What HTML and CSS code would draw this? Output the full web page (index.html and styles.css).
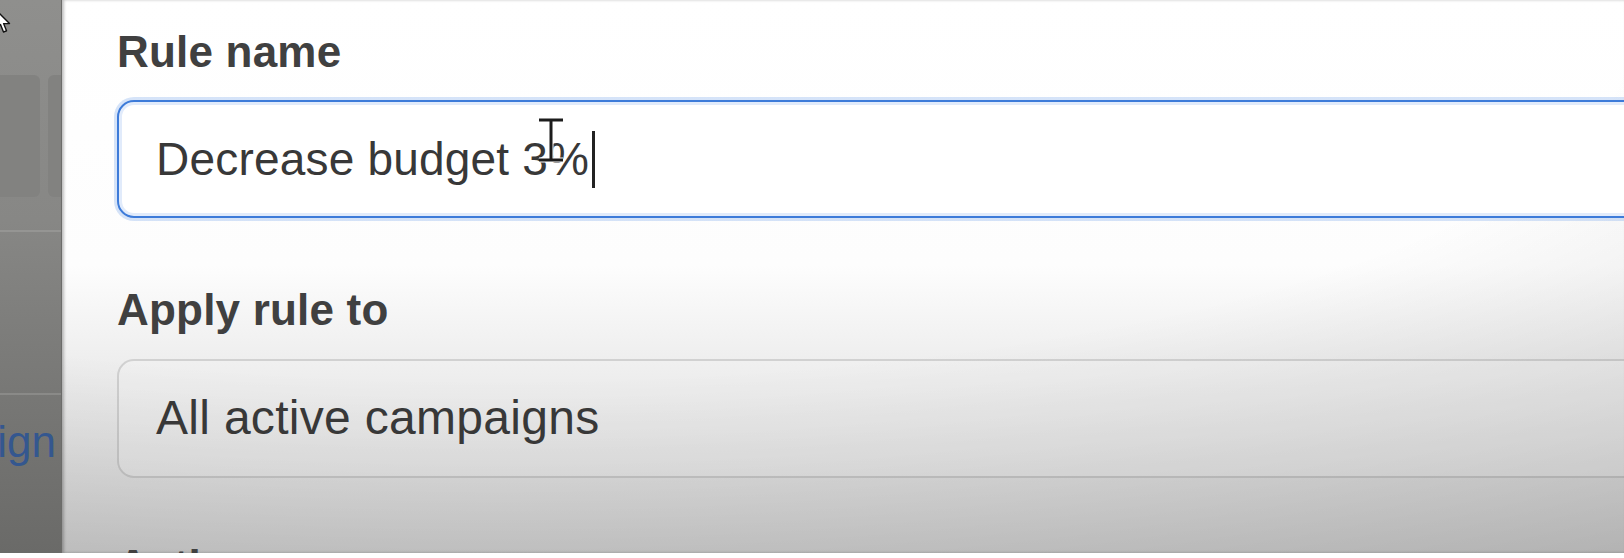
FILE: index.html
```html
<!DOCTYPE html>
<html lang="en">
<head>
    <meta charset="UTF-8">
    <meta name="viewport" content="width=device-width, initial-scale=1.0">
    <title>Create rule</title>
    <link rel="stylesheet" href="styles.css">
</head>
<body>
    <div class="frame">
        <!-- Dimmed page behind the dialog -->
        <aside class="backdrop">
            <div class="backdrop-cards">
                <div class="bcard wide"></div>
                <div class="bcard narrow"></div>
            </div>
            <div class="backdrop-row"></div>
            <div class="backdrop-link"><span>Campaign</span></div>
        </aside>

        <!-- Rule dialog -->
        <section class="dialog">
            <label class="field-label" for="ruleName">Rule name</label>
            <div class="text-input focused" id="ruleName">
                <span class="value">Decrease budget 3%</span>
                <span class="caret"></span>
                <svg class="ibeam" width="26" height="46" viewBox="0 0 26 46">
                    <path d="M1 3 H25 M13 3 V43 M1 43 H25" fill="none" stroke="#fff" stroke-width="5"/>
                    <path d="M1 3 H25 M13 3 V43 M1 43 H25" fill="none" stroke="#1c1c1c" stroke-width="3"/>
                </svg>
            </div>

            <label class="field-label second">Apply rule to</label>
            <div class="text-input select">
                <span class="value">All active campaigns</span>
            </div>

            <label class="field-label third">Action</label>
        </section>

        <svg class="pointer" width="16" height="26" viewBox="0 0 16 26">
            <path d="M1 1 L1 20 L5.5 15.5 L8.5 23 L11.5 21.8 L8.6 14.6 L14.5 14.6 Z" fill="#fff" stroke="#111" stroke-width="1.4" stroke-linejoin="round"/>
        </svg>
    </div>
</body>
</html>
```

FILE: styles.css
```css
* {
    box-sizing: border-box;
}

html, body {
    margin: 0;
    padding: 0;
}

body {
    width: 1624px;
    height: 558px;
    overflow: hidden;
    background-color: #fff;
    font-family: "Liberation Sans", Arial, sans-serif;
}

.frame {
    position: relative;
    display: flex;
    height: 553px;
    overflow: hidden;
}

/* Dimmed page on the left */
.backdrop {
    flex: none;
    width: 62px;
    background: linear-gradient(to bottom, #8f8f8d 0%, #878785 40%, #787876 70%, #6a6a68 100%);
    border-right: 1px solid #6c6c6a;
}

.backdrop-cards {
    display: flex;
    gap: 8px;
    height: 122px;
    margin-top: 75px;
}

.bcard {
    background-color: #828280;
    border-radius: 0 6px 6px 0;
}

.bcard.wide {
    width: 40px;
}

.bcard.narrow {
    flex: 1;
    border-radius: 6px 0 0 6px;
}

.backdrop-row {
    height: 163px;
    margin-top: 33px;
    border-top: 2px solid #959593;
}

.backdrop-link {
    display: flex;
    justify-content: flex-end;
    overflow: hidden;
    padding: 19px 5px 0 0;
    border-top: 2px solid #8a8a88;
    color: #34578f;
    font-size: 44px;
    line-height: 56px;
    white-space: nowrap;
}

/* Dialog */
.dialog {
    position: relative;
    flex: 1;
    min-width: 0;
    overflow: hidden;
    padding: 27px 0 0 55px;
    background:
        radial-gradient(ellipse 130% 110% at 28% 8%, rgba(0, 0, 0, 0) 55%, rgba(0, 0, 0, 0.15) 100%),
        linear-gradient(to bottom, #ffffff 0%, #fdfdfd 48%, #eaeaea 70%, #d2d2d2 100%);
    box-shadow: inset 2px 0 3px rgba(0, 0, 0, 0.25);
}

.field-label {
    display: block;
    color: #404040;
    font-size: 44px;
    font-weight: bold;
    line-height: 50px;
    letter-spacing: 0.2px;
}

.field-label.second {
    margin-top: 67px;
}

.field-label.third {
    margin-top: 63px;
}

.text-input {
    position: relative;
    display: flex;
    align-items: center;
    width: 1560px;
    height: 118px;
    margin-top: 23px;
    padding-left: 37px;
    border-radius: 17px;
    color: #383838;
    font-size: 46px;
    letter-spacing: 0.2px;
    white-space: nowrap;
}

.text-input.focused {
    border: 2px solid #3d7bd9;
    background-color: #fff;
    box-shadow: 0 0 0 3px rgba(120, 165, 235, 0.3), inset 0 0 0 3px rgba(120, 165, 235, 0.22);
}

.text-input.select {
    height: 119px;
    margin-top: 24px;
    padding-bottom: 3px;
    border: 2px solid rgba(0, 0, 0, 0.13);
    background-color: rgba(255, 255, 255, 0.12);
    font-size: 48px;
    letter-spacing: 0.3px;
}

.caret {
    width: 3px;
    height: 57px;
    margin-left: 3px;
    background-color: #222;
}

/* Mouse pointers over the page */
.ibeam {
    position: absolute;
    left: 419px;
    top: 15px;
}

.pointer {
    position: absolute;
    left: -5px;
    top: 9px;
}
```
